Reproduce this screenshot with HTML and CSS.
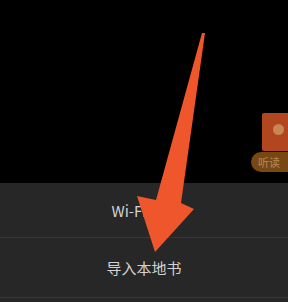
FILE: index.html
```html
<!DOCTYPE html>
<html lang="zh">
<head>
<meta charset="utf-8">
<link rel="stylesheet" href="styles.css">
</head>
<body>
<div class="screen">
  <div class="top">
    <div class="book-card">
      <div class="book-cover"><span class="cover-dot"></span></div>
      <div class="listen-pill">听读</div>
    </div>
  </div>
  <div class="sheet">
    <div class="row row-wifi">Wi-Fi传书</div>
    <div class="row row-local">导入本地书</div>
    <div class="row row-more"></div>
  </div>
  <svg class="arrow" width="288" height="302" viewBox="0 0 288 302">
    <polygon points="202,33 205,33 181,203 194,209 155,252 137,196 156,200" fill="#f0562b"/>
  </svg>
</div>
</body>
</html>
```

FILE: styles.css
```css
html, body {
  margin: 0;
  padding: 0;
  background: #000;
}
.screen {
  position: relative;
  width: 288px;
  height: 302px;
  overflow: hidden;
  background: #000;
  font-family: "Noto Sans CJK SC", "Noto Sans", sans-serif;
}
.top {
  height: 183px;
  display: flex;
  justify-content: flex-end;
  align-items: flex-start;
}
.book-card {
  margin-top: 113px;
  width: 37px;
  display: flex;
  flex-direction: column;
  align-items: flex-end;
}
.book-cover {
  width: 26px;
  height: 38px;
  background: #b2461f;
  border-radius: 2px 0 0 2px;
  display: flex;
  justify-content: center;
  padding-top: 11px;
  box-sizing: border-box;
}
.cover-dot {
  width: 11px;
  height: 11px;
  border-radius: 50%;
  background: #c98552;
  margin-left: 6px;
}
.listen-pill {
  margin-top: 1px;
  width: 37px;
  height: 20px;
  border-radius: 10px 0 0 10px;
  background: #774813;
  color: #b88a58;
  font-size: 11px;
  line-height: 20px;
  white-space: nowrap;
  padding-left: 7px;
  box-sizing: border-box;
}
.sheet {
  background: #272727;
}
.row {
  display: flex;
  justify-content: center;
  align-items: center;
  color: #d2d2d2;
  font-size: 15px;
  border-bottom: 1px solid #363636;
}
.row-wifi {
  height: 54px;
}
.row-local {
  height: 59px;
}
.row-more {
  height: 30px;
  border-bottom: none;
}
.arrow {
  position: absolute;
  left: 0;
  top: 0;
}
```
